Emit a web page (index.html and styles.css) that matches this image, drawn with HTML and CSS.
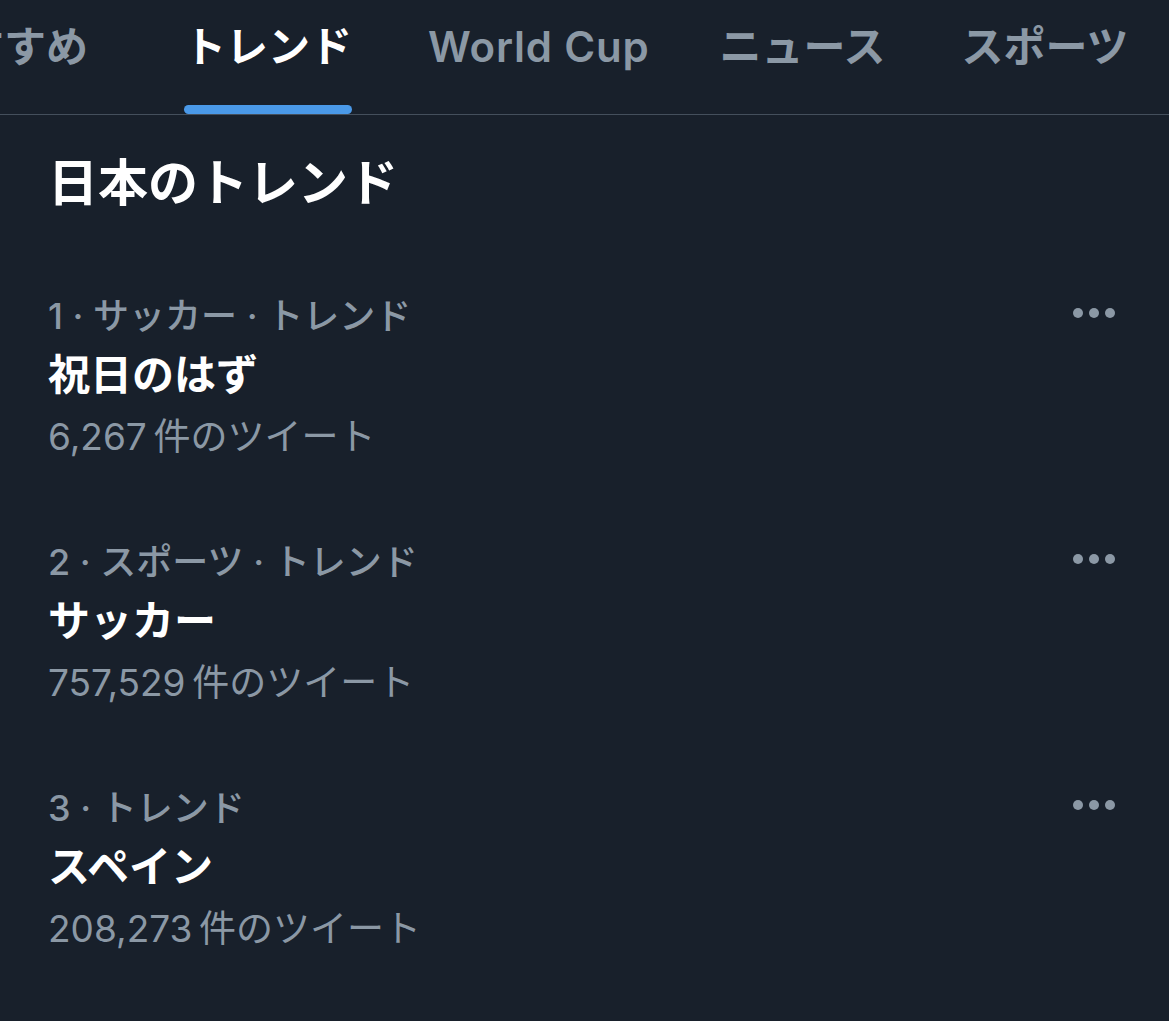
FILE: index.html
```html
<!DOCTYPE html>
<html lang="ja">

<head>
    <meta charset="UTF-8">
    <meta name="viewport" content="width=device-width, initial-scale=1.0">
    <title>トレンド</title>
    <link rel="stylesheet" href="styles.css">
</head>

<body>
    <!-- タブ -->
    <nav class="tabs">
        <div class="tab"><span class="tab-label">おすすめ</span><span class="tab-bar"></span></div>
        <div class="tab active"><span class="tab-label">トレンド</span><span class="tab-bar"></span></div>
        <div class="tab"><span class="tab-label latin">World Cup</span><span class="tab-bar"></span></div>
        <div class="tab"><span class="tab-label">ニュース</span><span class="tab-bar"></span></div>
        <div class="tab"><span class="tab-label">スポーツ</span><span class="tab-bar"></span></div>
    </nav>

    <h2 class="heading">日本のトレンド</h2>

    <div class="trend">
        <div class="trend-meta">
            <span>1 · サッカー · トレンド</span>
            <svg class="more" width="44" height="12" viewBox="0 0 44 12"><circle cx="6" cy="6" r="5"/><circle cx="22" cy="6" r="5"/><circle cx="38" cy="6" r="5"/></svg>
        </div>
        <div class="trend-title">祝日のはず</div>
        <div class="trend-count">6,267&#8201;件のツイート</div>
    </div>

    <div class="trend">
        <div class="trend-meta">
            <span>2 · スポーツ · トレンド</span>
            <svg class="more" width="44" height="12" viewBox="0 0 44 12"><circle cx="6" cy="6" r="5"/><circle cx="22" cy="6" r="5"/><circle cx="38" cy="6" r="5"/></svg>
        </div>
        <div class="trend-title">サッカー</div>
        <div class="trend-count">757,529&#8201;件のツイート</div>
    </div>

    <div class="trend">
        <div class="trend-meta">
            <span>3 · トレンド</span>
            <svg class="more" width="44" height="12" viewBox="0 0 44 12"><circle cx="6" cy="6" r="5"/><circle cx="22" cy="6" r="5"/><circle cx="38" cy="6" r="5"/></svg>
        </div>
        <div class="trend-title">スペイン</div>
        <div class="trend-count">208,273&#8201;件のツイート</div>
    </div>
</body>

</html>
```

FILE: styles.css
```css
body {
    margin: 0;
    padding: 0;
    background-color: #18202b;
    color: #ffffff;
    font-family: Inter, "Noto Sans CJK JP", sans-serif;
    overflow: hidden;
}

.tabs {
    display: flex;
    height: 114px;
    margin-left: -118px;
    border-bottom: 1px solid #444f5c;
    white-space: nowrap;
}

.tab {
    display: flex;
    flex-direction: column;
    flex-shrink: 0;
    padding: 0 38px;
}

.tab:first-child {
    padding-right: 58px;
}

.tab-label {
    height: 105px;
    line-height: 94px;
    font-size: 42px;
    font-weight: 600;
    color: #8b98a5;
}

.tab-label.latin {
    margin-right: -6px;
    letter-spacing: 0.8px;
}

.tab-bar {
    height: 9px;
    border-radius: 5px;
}

.tab.active .tab-label {
    color: #ffffff;
    font-weight: 700;
}

.tab.active .tab-bar {
    background-color: #4a99e8;
}

.heading {
    margin: 0;
    padding: 38px 48px 39px;
    line-height: 60px;
    font-size: 50px;
    font-weight: 700;
}

.trend {
    padding: 30px 53px 30px 48px;
}

.trend-meta {
    display: flex;
    justify-content: space-between;
    align-items: center;
    height: 62px;
    font-size: 36px;
    font-weight: 500;
    color: #8b98a5;
}

.more {
    fill: #8b98a5;
}

.trend-title {
    line-height: 62px;
    font-size: 42px;
    font-weight: 700;
}

.trend-count {
    line-height: 62px;
    font-size: 37px;
    color: #8b98a5;
}
```
